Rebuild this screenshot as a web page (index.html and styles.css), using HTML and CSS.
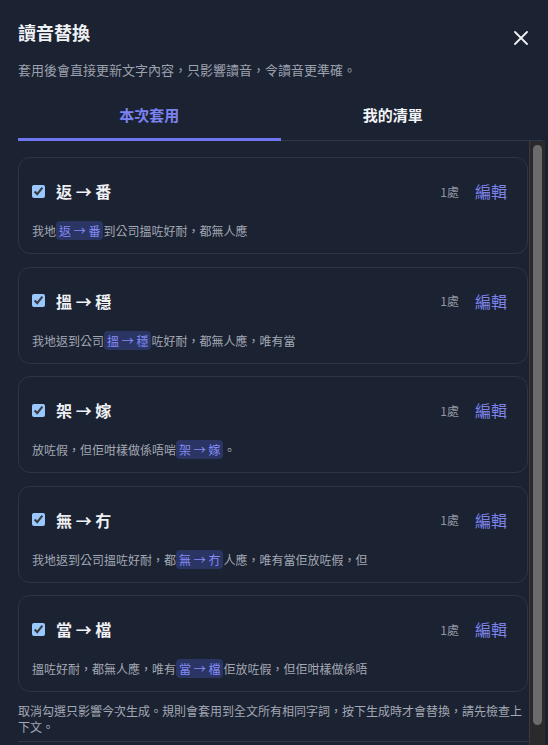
FILE: index.html
```html
<!DOCTYPE html>
<html lang="zh-Hant">
<head>
    <meta charset="utf-8">
    <title>讀音替換</title>
    <link rel="stylesheet" href="styles.css">
</head>
<body>
    <div class="modal">
        <div class="modal-header">
            <h1>讀音替換</h1>
            <button class="close-btn" aria-label="關閉">
                <svg width="14" height="14" viewBox="0 0 14 14">
                    <path d="M1 1L13 13M13 1L1 13" stroke="#eef0f4" stroke-width="1.8" stroke-linecap="round"/>
                </svg>
            </button>
        </div>
        <p class="subtitle">套用後會直接更新文字內容，只影響讀音，令讀音更準確。</p>

        <div class="tabs">
            <div class="tab active">本次套用</div>
            <div class="tab other">我的清單</div>
        </div>

        <div class="scroll-area">
            <div class="scroll-content">
                <div class="rule-list">
                    <div class="rule-card">
                        <div class="rule-head">
                            <input type="checkbox" checked>
                            <span class="rule-title">返 → 番</span>
                            <span class="rule-count">1處</span>
                            <a class="rule-edit">編輯</a>
                        </div>
                        <p class="rule-context">我地<span class="hl">返 → 番</span>到公司搵咗好耐，都無人應</p>
                    </div>
                    <div class="rule-card">
                        <div class="rule-head">
                            <input type="checkbox" checked>
                            <span class="rule-title">搵 → 穩</span>
                            <span class="rule-count">1處</span>
                            <a class="rule-edit">編輯</a>
                        </div>
                        <p class="rule-context">我地返到公司<span class="hl">搵 → 穩</span>咗好耐，都無人應，唯有當</p>
                    </div>
                    <div class="rule-card">
                        <div class="rule-head">
                            <input type="checkbox" checked>
                            <span class="rule-title">架 → 嫁</span>
                            <span class="rule-count">1處</span>
                            <a class="rule-edit">編輯</a>
                        </div>
                        <p class="rule-context">放咗假，但佢咁樣做係唔啱<span class="hl">架 → 嫁</span>。</p>
                    </div>
                    <div class="rule-card">
                        <div class="rule-head">
                            <input type="checkbox" checked>
                            <span class="rule-title">無 → 冇</span>
                            <span class="rule-count">1處</span>
                            <a class="rule-edit">編輯</a>
                        </div>
                        <p class="rule-context">我地返到公司搵咗好耐，都<span class="hl">無 → 冇</span>人應，唯有當佢放咗假，但</p>
                    </div>
                    <div class="rule-card">
                        <div class="rule-head">
                            <input type="checkbox" checked>
                            <span class="rule-title">當 → 檔</span>
                            <span class="rule-count">1處</span>
                            <a class="rule-edit">編輯</a>
                        </div>
                        <p class="rule-context">搵咗好耐，都無人應，唯有<span class="hl">當 → 檔</span>佢放咗假，但佢咁樣做係唔</p>
                    </div>
                </div>

                <p class="hint">取消勾選只影響今次生成。規則會套用到全文所有相同字詞，按下生成時才會替換，請先檢查上下文。</p>

                <div class="footer-space"></div>
            </div>

            <!-- scrollbar drawn by hand, headless uses overlay bars -->
            <div class="scrollbar">
                <div class="scrollbar-thumb"></div>
            </div>
        </div>
    </div>
</body>
</html>
```

FILE: styles.css
```css
html, body {
    margin: 0;
    height: 100%;
    background: #1b2232;
    overflow: hidden;
}

body {
    font-family: "Noto Sans CJK TC", "Noto Sans", sans-serif;
    color: #eef0f4;
}

.modal {
    padding: 19px 3px 0 18px;
}

.modal-header {
    display: flex;
    justify-content: space-between;
    align-items: flex-start;
}

h1 {
    margin: 0;
    font-size: 18px;
    line-height: 26px;
    font-weight: 700;
}

.close-btn {
    background: none;
    border: none;
    padding: 0;
    margin: 12px 17px 0 0;
    width: 14px;
    height: 14px;
    display: flex;
}

.subtitle {
    margin: 15px 0 0;
    font-size: 13px;
    line-height: 20px;
    color: #9ba1ad;
}

.tabs {
    display: grid;
    grid-template-columns: 1fr 1fr;
    margin-top: 15px;
    margin-right: 2px;
    border-bottom: 1px solid #2f3748;
}

.tab {
    text-align: center;
    font-size: 15px;
    font-weight: 700;
    line-height: 22px;
    padding: 9px 0 12px;
    border-bottom: 3px solid transparent;
    margin-bottom: -1px;
}

.tab.active {
    color: #7b83f2;
    border-bottom-color: #6d76f0;
}

.tab.other {
    padding-right: 38px;
    color: #f2f3f6;
}

.scroll-area {
    display: flex;
    height: 604px;
    overflow: hidden;
}

.scroll-content {
    flex: 1;
    min-width: 0;
}

.scrollbar {
    width: 16px;
    flex-shrink: 0;
    background: #2a2a2c;
    border-left: 1px solid #3b3b3d;
    box-sizing: border-box;
    padding: 4px 3px 0 3px;
}

.scrollbar-thumb {
    height: 580px;
    background: #6b6b6d;
    border-radius: 5px;
}

.rule-list {
    display: flex;
    flex-direction: column;
    gap: 12.5px;
    padding-top: 16px;
    padding-right: 1px;
}

.rule-card {
    border: 1px solid #2d3547;
    border-radius: 12px;
    padding: 21px 20px 12px 13px;
    height: 97px;
    box-sizing: border-box;
}

.rule-head {
    display: flex;
    align-items: center;
    height: 24px;
}

.rule-head input {
    margin: 0;
    width: 13px;
    height: 13px;
    accent-color: #99c8ff;
}

.rule-title {
    margin-left: 11px;
    font-size: 16px;
    font-weight: 700;
    flex: 1;
}

.rule-count {
    font-size: 12px;
    color: #9298a4;
    margin-right: 16px;
}

.rule-edit {
    font-size: 16px;
    color: #7b83ea;
    cursor: pointer;
}

.rule-context {
    margin: 18px 0 0;
    font-size: 12px;
    line-height: 20px;
    color: #a3a8b2;
}

.hl {
    background: #2b3564;
    color: #838cf7;
    border-radius: 4px;
    padding: 1px 3px;
}

.hint {
    margin: 11px 0 0;
    font-size: 12px;
    line-height: 16px;
    color: #a3a8b2;
}

.footer-space {
    margin-top: 6px;
    border-top: 1px solid #2f3748;
    height: 30px;
}
```
